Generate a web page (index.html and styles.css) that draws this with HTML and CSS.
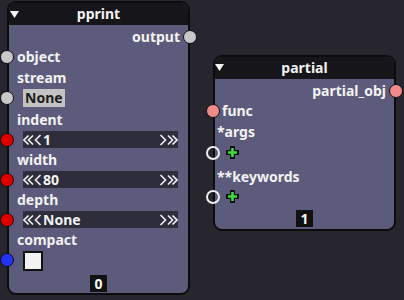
FILE: index.html
```html
<!DOCTYPE html>
<html>
<head>
<meta charset="utf-8">
<link rel="stylesheet" href="styles.css">
</head>
<body>
<div class="canvas">
  <div class="node node-pprint">
    <div class="header">
      <svg class="tri" width="9" height="7" viewBox="0 0 9 7"><polygon points="0,0 9,0 4.5,7" fill="#f4f4f4"/></svg>
      <span class="title">pprint</span>
    </div>
    <div class="body">
      <div class="row r20 right"><span class="label">output</span><span class="sock sock-r gray"></span></div>
      <div class="row r20"><span class="label">object</span><span class="sock sock-l gray"></span></div>
      <div class="row r21"><span class="label">stream</span></div>
      <div class="row r22 widget-row"><span class="sock sock-l gray"></span><span class="nonebox">None</span></div>
      <div class="row r20"><span class="label">indent</span></div>
      <div class="row r20 widget-row"><span class="sock sock-l red"></span>
        <div class="spin">
          <svg class="chev" width="19" height="12" viewBox="0 0 19 12"><g fill="none" stroke="#ececec" stroke-width="1.7"><polyline points="5.5,1.5 1,6 5.5,10.5"/><polyline points="10,1.5 5.5,6 10,10.5"/><polyline points="17.5,1 12.5,6 17.5,11"/></g></svg>
          <span class="val">1</span>
          <svg class="chev chev-r" width="19" height="12" viewBox="0 0 19 12"><g fill="none" stroke="#ececec" stroke-width="1.7"><polyline points="1.5,1 6.5,6 1.5,11"/><polyline points="9,1.5 13.5,6 9,10.5"/><polyline points="13.5,1.5 18,6 13.5,10.5"/></g></svg>
        </div>
      </div>
      <div class="row r20"><span class="label">width</span></div>
      <div class="row r20 widget-row"><span class="sock sock-l red"></span>
        <div class="spin">
          <svg class="chev" width="19" height="12" viewBox="0 0 19 12"><g fill="none" stroke="#ececec" stroke-width="1.7"><polyline points="5.5,1.5 1,6 5.5,10.5"/><polyline points="10,1.5 5.5,6 10,10.5"/><polyline points="17.5,1 12.5,6 17.5,11"/></g></svg>
          <span class="val">80</span>
          <svg class="chev chev-r" width="19" height="12" viewBox="0 0 19 12"><g fill="none" stroke="#ececec" stroke-width="1.7"><polyline points="1.5,1 6.5,6 1.5,11"/><polyline points="9,1.5 13.5,6 9,10.5"/><polyline points="13.5,1.5 18,6 13.5,10.5"/></g></svg>
        </div>
      </div>
      <div class="row r20"><span class="label">depth</span></div>
      <div class="row r20 widget-row"><span class="sock sock-l red"></span>
        <div class="spin">
          <svg class="chev" width="19" height="12" viewBox="0 0 19 12"><g fill="none" stroke="#ececec" stroke-width="1.7"><polyline points="5.5,1.5 1,6 5.5,10.5"/><polyline points="10,1.5 5.5,6 10,10.5"/><polyline points="17.5,1 12.5,6 17.5,11"/></g></svg>
          <span class="val">None</span>
          <svg class="chev chev-r" width="19" height="12" viewBox="0 0 19 12"><g fill="none" stroke="#ececec" stroke-width="1.7"><polyline points="1.5,1 6.5,6 1.5,11"/><polyline points="9,1.5 13.5,6 9,10.5"/><polyline points="13.5,1.5 18,6 13.5,10.5"/></g></svg>
        </div>
      </div>
      <div class="row r20"><span class="label">compact</span></div>
      <div class="row r22 widget-row"><span class="sock sock-l blue"></span><span class="check"></span></div>
      <div class="badge-row"><span class="badge">0</span></div>
    </div>
  </div>

  <div class="node node-partial">
    <div class="header">
      <svg class="tri" width="9" height="7" viewBox="0 0 9 7"><polygon points="0,0 9,0 4.5,7" fill="#f4f4f4"/></svg>
      <span class="title">partial</span>
    </div>
    <div class="body">
      <div class="row r20 right"><span class="label">partial_obj</span><span class="sock sock-r pink"></span></div>
      <div class="row r19 func"><span class="label">func</span><span class="sock sock-l pink"></span></div>
      <div class="row r22 end"><span class="label">*args</span></div>
      <div class="row r21 plus-row"><span class="sock sock-l hollow"></span>
        <svg class="plus" width="13" height="13" viewBox="0 0 13 13"><path d="M6.5 1.5V11.5M1.5 6.5H11.5" stroke="#111" stroke-width="5" stroke-linecap="square"/><path d="M6.5 2V11M2 6.5H11" stroke="#3fdc3f" stroke-width="2.6"/></svg>
      </div>
      <div class="row r24 end"><span class="label">**keywords</span></div>
      <div class="row r19 plus-row"><span class="sock sock-l hollow"></span>
        <svg class="plus" width="13" height="13" viewBox="0 0 13 13"><path d="M6.5 1.5V11.5M1.5 6.5H11.5" stroke="#111" stroke-width="5" stroke-linecap="square"/><path d="M6.5 2V11M2 6.5H11" stroke="#3fdc3f" stroke-width="2.6"/></svg>
      </div>
      <div class="badge-row"><span class="badge">1</span></div>
    </div>
  </div>
</div>
</body>
</html>
```

FILE: styles.css
```css
html, body {
  margin: 0;
  padding: 0;
}
body {
  background: #27262e;
}
.canvas {
  position: relative;
  width: 404px;
  height: 300px;
  overflow: hidden;
  background: #27262e;
  font-family: "Noto Sans", "Open Sans", sans-serif;
  font-weight: 700;
  font-size: 14px;
  color: #f2f2f2;
}
.node {
  position: absolute;
  box-sizing: border-box;
  width: 183px;
  border: 2px solid #0c0c0f;
  border-radius: 9px;
  background: #5d5b7b;
}
.node-pprint {
  left: 7px;
  top: 1px;
  height: 294px;
}
.node-partial {
  left: 213px;
  top: 55px;
  height: 176px;
}
.header {
  position: relative;
  height: 22px;
  background: #161519;
  border-radius: 7px 7px 0 0;
  display: flex;
  align-items: center;
  justify-content: center;
  line-height: 22px;
}
.tri {
  position: absolute;
  left: 1px;
  top: 8px;
}
.node-partial .tri {
  top: 7px;
  left: 0;
}
.body {
  padding-top: 2px;
}
.row {
  position: relative;
  display: flex;
  align-items: center;
  padding: 0 8px;
  line-height: 20px;
}
.node-partial .row {
  padding-left: 2px;
}
.node-partial .row.func {
  padding-left: 7px;
}
.row.right {
  justify-content: flex-end;
}
.row.end {
  align-items: flex-end;
}
.r19 { height: 19px; }
.r20 { height: 20px; }
.r21 { height: 21px; }
.r22 { height: 22px; }
.r24 { height: 24px; }
.widget-row {
  align-items: flex-start;
  padding-left: 14px;
  padding-right: 10px;
}
.sock {
  position: absolute;
  box-sizing: border-box;
  width: 14px;
  height: 14px;
  border: 1.5px solid #101014;
  border-radius: 50%;
  top: 50%;
  margin-top: -7px;
}
.widget-row .sock {
  top: 10px;
}
.sock-l {
  left: -9px;
}
.sock-r {
  right: -9px;
}
.gray { background: #c8c8c8; }
.red { background: #df0000; }
.blue { background: #2233f2; }
.pink { background: #f08a8a; }
.hollow {
  background: transparent;
  border: 2px solid #eeeeee;
}
.nonebox {
  margin-top: 1px;
  height: 18px;
  line-height: 18px;
  padding: 0 2px;
  background: #c3c3c3;
  color: #1c1c1c;
}
.spin {
  margin-top: 1px;
  width: 155px;
  height: 17px;
  background: #2e2d3b;
  display: flex;
  align-items: center;
  line-height: 17px;
}
.chev {
  flex: none;
}
.val {
  margin-left: 1px;
  flex: 1;
}
.check {
  margin-top: 1px;
  box-sizing: border-box;
  width: 20px;
  height: 20px;
  background: #f2f2f2;
  border: 2px solid #101010;
}
.plus-row {
  padding-left: 11px !important;
}
.plus {
  display: block;
}
.badge-row {
  display: flex;
  justify-content: center;
  padding-top: 3px;
}
.node-partial .badge-row {
  padding-top: 4px;
}
.badge {
  height: 17px;
  line-height: 17px;
  padding: 0 4px;
  background: #111;
  color: #f6f6f6;
}
```
